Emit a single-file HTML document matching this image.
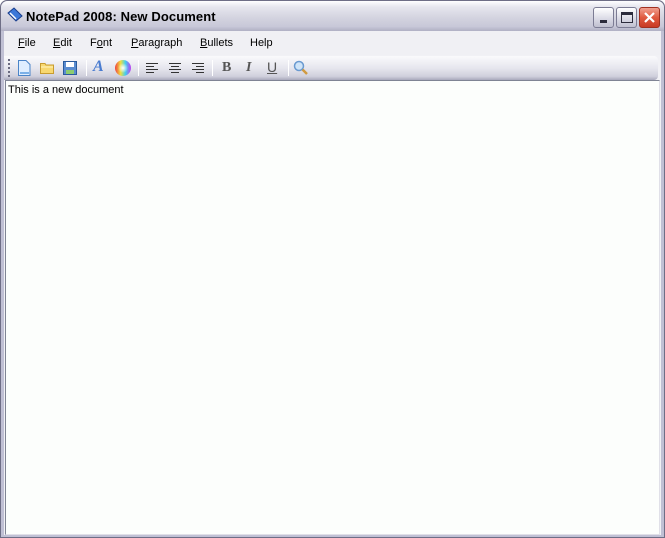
<!DOCTYPE html>
<html><head><style>
*{margin:0;padding:0;box-sizing:border-box}
body{width:665px;height:538px;overflow:hidden;background:#fff;font-family:"Liberation Sans",sans-serif;position:relative}
.win{position:absolute;left:0;top:0;width:665px;height:538px;border-radius:7px 7px 0 0;background:#c0c0d4;border:1px solid #6e6e86}
.title{position:absolute;left:0;top:0;width:663px;height:30px;border-radius:7px 7px 0 0;background:linear-gradient(#ffffff 0%,#e6e6ee 20%,#d4d4e0 55%,#c8c8d8 85%,#b0b0c4 100%)}
.ttext{position:absolute;left:25px;top:8px;font-size:13px;font-weight:bold;color:#000;letter-spacing:0.1px}
.btn{position:absolute;top:6px;width:21px;height:21px;border-radius:3px;border:1px solid #7c7c94;background:linear-gradient(#fff,#d8d8e4 60%,#c0c0d0)}
.close{background:linear-gradient(#f0a090,#e05a40 50%,#c83a24);border-color:#a03020}
.inner{position:absolute;left:3px;top:30px;width:657px;height:504px;background:#f1f1f5}
.menu{position:absolute;left:0;top:0;width:657px;height:24px;background:#f0f0f4;font-size:11px}
.menu span{position:absolute;top:6px}
.tb{position:absolute;left:0;top:25px;width:654px;height:24px;border-radius:0 4px 4px 0;background:linear-gradient(#fafafc,#e6e6ee 50%,#d0d0dc 85%,#a8a8bc)}
.sep{position:absolute;top:4px;width:1px;height:16px;background:#9c9cb0;border-right:1px solid #fff}
.ed{position:absolute;left:1px;top:49px;width:655px;height:455px;background:#fcfefc;border:1px solid #7f8494;border-right-color:#e0e0e8;border-bottom-color:#e0e0e8}
.ed div{position:absolute;left:2px;top:3px;font-size:11px;color:#000}
.ic{position:absolute;top:4px}
</style></head><body>
<div class="win">
<div class="title">
<svg style="position:absolute;left:5px;top:6px" width="18" height="18" viewBox="0 0 18 18"><path d="M2 6 L10 14 L16 9 L8 1 Z" fill="#3c78d8" stroke="#1a3e8c"/><path d="M4 6 L10 12" stroke="#fff" stroke-width="1.5"/></svg>
<div class="ttext">NotePad 2008: New Document</div>
<div class="btn" style="left:592px"><div style="position:absolute;left:6px;top:12px;width:7px;height:3px;background:#2c2c3c"></div></div>
<div class="btn" style="left:615px"><div style="position:absolute;left:4px;top:4px;width:12px;height:11px;border:2px solid #2c2c3c;border-width:3px 1.5px 1.5px"></div></div>
<div class="btn close" style="left:638px"><svg width="19" height="19" style="position:absolute;left:0;top:0"><path d="M5 5 L14 14 M14 5 L5 14" stroke="#fff" stroke-width="2.2"/></svg></div>
</div>
<div class="inner">
<div class="menu">
<span style="left:14px"><u>F</u>ile</span>
<span style="left:49px"><u>E</u>dit</span>
<span style="left:86px">F<u>o</u>nt</span>
<span style="left:127px"><u>P</u>aragraph</span>
<span style="left:196px"><u>B</u>ullets</span>
<span style="left:246px">Help</span>
</div>
<div class="tb">
<div style="position:absolute;left:4px;top:3px;width:2px;height:18px;background:repeating-linear-gradient(#6a6a80 0 2px,transparent 2px 4px)"></div>
<svg class="ic" style="left:12px" width="16" height="16"><path d="M2.5 .5 H10 L14 4.5 V15.5 H2.5 Z" fill="#dfeeff" stroke="#4a84c8"/><path d="M4 13 H13" stroke="#7ab0e8" stroke-width="2"/></svg>
<svg class="ic" style="left:35px" width="16" height="16"><path d="M1.5 3.5 H6 L7 5 H14.5 V13.5 H1.5 Z" fill="#f8d870" stroke="#c89c30"/><path d="M2 7 H14" stroke="#fff3c0"/></svg>
<svg class="ic" style="left:58px" width="16" height="16"><rect x="1.5" y="1.5" width="13" height="13" fill="#5a8cd0" stroke="#2a5a9c"/><rect x="4" y="2" width="8" height="5" fill="#fff"/><rect x="4" y="10" width="8" height="4" fill="#8ccc70"/></svg>
<div class="sep" style="left:82px"></div>
<div style="position:absolute;left:89px;top:2px;font:bold italic 16px 'Liberation Serif',serif;color:#4a7cd0">A</div>
<svg class="ic" style="left:110px;top:3px" width="18" height="18"><defs><linearGradient id="g" x1="0" x2="1"><stop offset="0" stop-color="#f04040"/><stop offset=".35" stop-color="#f0e040"/><stop offset=".65" stop-color="#40d0f0"/><stop offset="1" stop-color="#c040f0"/></linearGradient><radialGradient id="r"><stop offset="0" stop-color="#fff"/><stop offset="1" stop-color="#fff" stop-opacity="0"/></radialGradient></defs><circle cx="9" cy="9" r="8" fill="url(#g)"/><circle cx="9" cy="9" r="5" fill="url(#r)"/></svg>
<div class="sep" style="left:134px"></div>
<svg class="ic" style="left:141px" width="14" height="16"><path d="M1 3.5H13M1 6.5H9M1 9.5H13M1 12.5H9" stroke="#333"/></svg>
<svg class="ic" style="left:164px" width="14" height="16"><path d="M1 3.5H13M3 6.5H11M1 9.5H13M3 12.5H11" stroke="#333"/></svg>
<svg class="ic" style="left:187px" width="14" height="16"><path d="M1 3.5H13M5 6.5H13M1 9.5H13M5 12.5H13" stroke="#333"/></svg>
<div class="sep" style="left:208px"></div>
<div style="position:absolute;left:218px;top:4px;font:bold 14px 'Liberation Serif',serif;color:#555">B</div>
<div style="position:absolute;left:242px;top:4px;font:bold italic 14px 'Liberation Serif',serif;color:#555">I</div>
<div style="position:absolute;left:263px;top:3px;font:14px 'Liberation Sans',sans-serif;color:#555;text-decoration:underline">U</div>
<div class="sep" style="left:284px"></div>
<svg class="ic" style="left:289px" width="16" height="16"><circle cx="6" cy="6" r="4.5" fill="#cfe4f8" stroke="#6a9ad0" stroke-width="1.5"/><path d="M9.5 9.5 L14 14" stroke="#d09a40" stroke-width="2.5"/></svg>
</div>
<div class="ed"><div>This is a new document</div></div>
</div>
</div>
</body></html>
